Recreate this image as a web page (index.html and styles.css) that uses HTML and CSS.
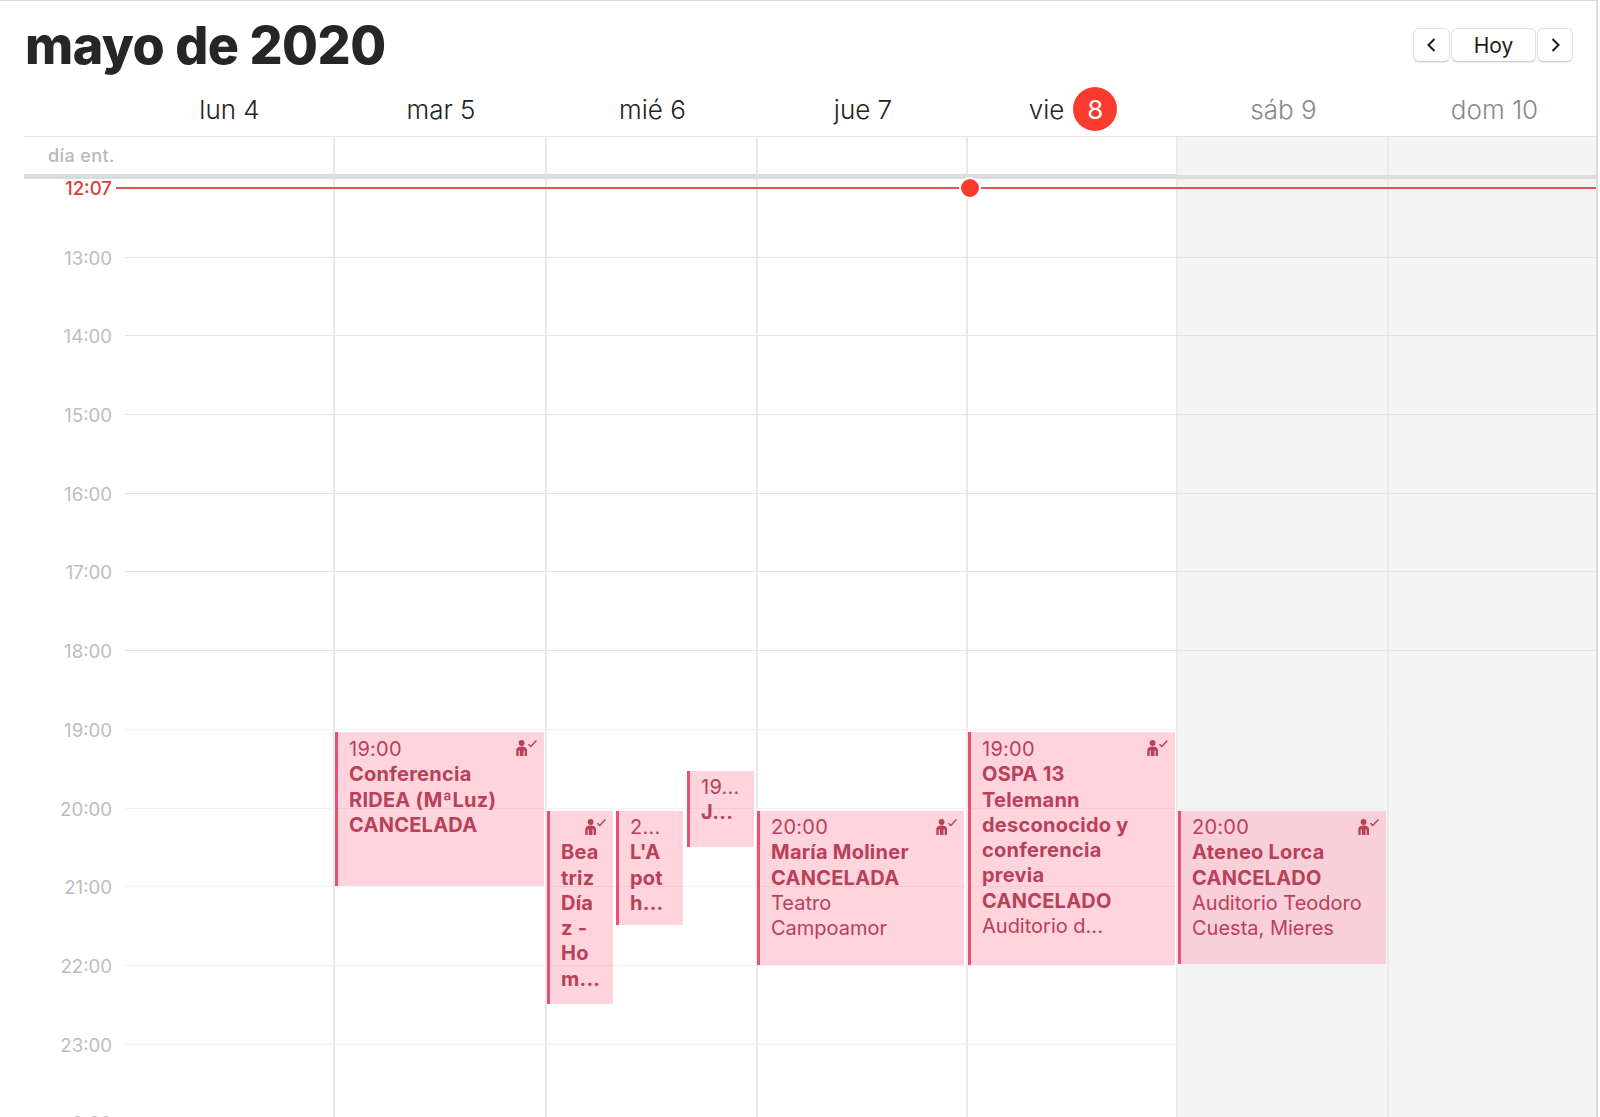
FILE: index.html
```html
<!DOCTYPE html>
<html lang="es">

<head>
    <meta charset="UTF-8">
    <meta name="viewport" content="width=device-width, initial-scale=1.0">
    <title>mayo de 2020</title>
    <link rel="stylesheet" href="styles.css">
</head>

<body>
    <svg class="defs" width="0" height="0">
        <symbol id="attendee" viewBox="0 0 21 16">
            <circle cx="5.6" cy="3" r="2.9" fill="currentColor"></circle>
            <path fill="currentColor" d="M0.3 16V10.2C0.3 7.8 2.6 6.6 5.6 6.6S11 7.8 11 10.2V16H8.6V10.4H7.5V16H3.8V10.4H2.7V16Z"></path>
            <path fill="none" stroke="currentColor" stroke-width="1.4" d="M12.4 4.2L14.8 6.4L20.4 0.6"></path>
        </symbol>
    </svg>

    <div class="calendar">
        <div class="top">
            <h1 class="title">mayo de 2020</h1>
            <div class="nav">
                <a href="javascript:;" class="btn btn-arrow" aria-label="Anterior">
                    <svg width="11" height="16" viewBox="0 0 11 16"><path d="M8.5 2L2.5 8L8.5 14"></path></svg>
                </a>
                <a href="javascript:;" class="btn btn-today">Hoy</a>
                <a href="javascript:;" class="btn btn-arrow" aria-label="Siguiente">
                    <svg width="11" height="16" viewBox="0 0 11 16"><path d="M2.5 2L8.5 8L2.5 14"></path></svg>
                </a>
            </div>
        </div>

        <div class="days week">
            <div class="gutter"></div>
            <div class="day">lun 4</div>
            <div class="day">mar 5</div>
            <div class="day">mié 6</div>
            <div class="day">jue 7</div>
            <div class="day">vie <span class="today">8</span></div>
            <div class="day off">sáb 9</div>
            <div class="day off last">dom 10</div>
        </div>

        <div class="allday week">
            <div class="gutter allday-label">día ent.</div>
            <div class="cell"></div>
            <div class="cell"></div>
            <div class="cell"></div>
            <div class="cell"></div>
            <div class="cell"></div>
            <div class="cell weekend"></div>
            <div class="cell weekend"></div>
        </div>

        <div class="timeline">
            <!-- columnas de fondo -->
            <div class="layer week">
                <div class="gutter"></div>
                <div class="cell"></div>
                <div class="cell"></div>
                <div class="cell"></div>
                <div class="cell"></div>
                <div class="cell"></div>
                <div class="cell weekend"></div>
                <div class="cell weekend"></div>
            </div>

            <!-- horas -->
            <div class="hours">
                <div class="hour"><span class="hour-label">13:00</span></div>
                <div class="hour"><span class="hour-label">14:00</span></div>
                <div class="hour"><span class="hour-label">15:00</span></div>
                <div class="hour"><span class="hour-label">16:00</span></div>
                <div class="hour"><span class="hour-label">17:00</span></div>
                <div class="hour"><span class="hour-label">18:00</span></div>
                <div class="hour night"><span class="hour-label">19:00</span></div>
                <div class="hour night"><span class="hour-label">20:00</span></div>
                <div class="hour night"><span class="hour-label">21:00</span></div>
                <div class="hour night"><span class="hour-label">22:00</span></div>
                <div class="hour night"><span class="hour-label">23:00</span></div>
                <div class="hour night"><span class="hour-label">0:00</span></div>
            </div>

            <!-- eventos -->
            <div class="layer week">
                <div class="gutter"></div>
                <div class="col"></div>
                <div class="col">
                    <div class="event ev-ridea">
                        <svg class="ico"><use href="#attendee"></use></svg>
                        <div>19:00</div>
                        <div class="name">Conferencia<br>RIDEA (MªLuz)<br>CANCELADA</div>
                    </div>
                </div>
                <div class="col">
                    <div class="event ev-beatriz">
                        <svg class="ico"><use href="#attendee"></use></svg>
                        <div>&nbsp;</div>
                        <div class="name">Bea<br>triz<br>Día<br>z -<br>Ho<br>m...</div>
                    </div>
                    <div class="event ev-lapoth">
                        <div>2...</div>
                        <div class="name">L'A<br>pot<br>h...</div>
                    </div>
                    <div class="event ev-j">
                        <div>19...</div>
                        <div class="name">J...</div>
                    </div>
                </div>
                <div class="col">
                    <div class="event ev-moliner">
                        <svg class="ico"><use href="#attendee"></use></svg>
                        <div>20:00</div>
                        <div class="name">María Moliner<br>CANCELADA</div>
                        <div class="place">Teatro<br>Campoamor</div>
                    </div>
                </div>
                <div class="col">
                    <div class="event ev-ospa">
                        <svg class="ico"><use href="#attendee"></use></svg>
                        <div>19:00</div>
                        <div class="name">OSPA 13<br>Telemann<br>desconocido y<br>conferencia<br>previa<br>CANCELADO</div>
                        <div class="place">Auditorio d...</div>
                    </div>
                </div>
                <div class="col">
                    <div class="event ev-ateneo">
                        <svg class="ico"><use href="#attendee"></use></svg>
                        <div>20:00</div>
                        <div class="name">Ateneo Lorca<br>CANCELADO</div>
                        <div class="place">Auditorio Teodoro<br>Cuesta, Mieres</div>
                    </div>
                </div>
                <div class="col"></div>
            </div>

            <!-- hora actual -->
            <div class="now">
                <span class="now-label">12:07</span>
                <span class="now-line"></span>
                <span class="now-dot"></span>
            </div>
        </div>
    </div>
</body>

</html>
```

FILE: styles.css
```css
* {
    margin: 0;
    padding: 0;
    box-sizing: border-box;
}

html,
body {
    height: 100%;
    overflow: hidden;
    background: #fff;
}

body {
    font-family: Inter, "Liberation Sans", sans-serif;
    color: #222;
}

.defs {
    position: absolute;
}

.calendar {
    width: 1598px;
    height: 1117px;
    padding-left: 24px;
    border-top: 1px solid #d9d9d9;
    border-right: 2px solid #dcdcdc;
    overflow: hidden;
}

.top {
    height: 81px;
    display: flex;
    justify-content: space-between;
    align-items: center;
    padding-right: 23px;
    padding-top: 7px;
}

.title {
    font-size: 52px;
    font-weight: 800;
    letter-spacing: -0.5px;
    color: #262626;
    padding-left: 1px;
}

.nav {
    display: flex;
    gap: 1px;
}

.btn {
    display: flex;
    align-items: center;
    justify-content: center;
    height: 34px;
    background: #fff;
    border: 1px solid #e2e2e2;
    border-bottom-color: #cfcfcf;
    border-radius: 6px;
    box-shadow: 0 1px 1px rgba(0, 0, 0, .08);
    color: #1c1c1c;
    text-decoration: none;
    font-size: 21px;
}

.btn-arrow {
    width: 36px;
}

.btn-arrow:first-child {
    width: 37px;
}

.btn-arrow path {
    fill: none;
    stroke: #1c1c1c;
    stroke-width: 2;
}

.btn-today {
    width: 85px;
}

.week {
    display: grid;
    grid-template-columns: 100px 211px 212px 211px 210px 210px 211px 1fr;
}

.days {
    height: 55px;
    border-bottom: 1px solid #e4e4e4;
}

.day {
    display: flex;
    align-items: center;
    justify-content: center;
    gap: 9px;
    font-size: 26px;
    font-weight: 300;
    color: #222;
}

.day.off {
    color: #8a8a8a;
}

.day.last {
    padding-left: 4px;
}

.today {
    width: 44px;
    height: 44px;
    border-radius: 50%;
    background: #fb3b30;
    color: #fff;
    font-weight: 400;
    display: flex;
    align-items: center;
    justify-content: center;
}

.allday {
    height: 37px;
    border-bottom: 5px solid #dcdcdc;
    box-sizing: content-box;
}

.allday-label {
    font-size: 18px;
    font-weight: 500;
    color: #b9b9b9;
    letter-spacing: .4px;
    padding-left: 24px;
    line-height: 38px;
}

.cell {
    border-right: 2px solid #e9e9e9;
}

.cell.weekend {
    background: #f4f4f4;
}

.cell:last-child {
    border-right: 0;
}

.timeline {
    position: relative;
}

.layer {
    position: absolute;
    left: 0;
    right: 0;
    top: 0;
    height: 940px;
}

.hours {
    position: relative;
}

.hour {
    height: 78.7px;
    display: flex;
    align-items: flex-end;
}

.hour::after {
    content: "";
    flex: 1;
    height: 1px;
    background: #e4e4e4;
    margin-left: 13px;
}

.hour.night::after {
    background: #f2f2f2;
}

.hour-label {
    width: 88px;
    text-align: right;
    font-size: 18.6px;
    line-height: 24px;
    margin-bottom: -12px;
    color: #bdbdbd;
}

.col {
    position: relative;
}

.event {
    position: absolute;
    padding: 4px 0 0 11px;
    border-left: 3px solid #ea5070;
    background: rgba(255, 60, 100, .22);
    color: #b94059;
    font-size: 20px;
    letter-spacing: .25px;
    line-height: 25.3px;
    overflow: hidden;
}

.name {
    font-weight: 700;
}

.place {
    letter-spacing: 0;
}

.ico {
    position: absolute;
    top: 8px;
    right: 7px;
    width: 21px;
    height: 16px;
    color: #b94059;
}

.ev-ridea {
    top: 553px;
    left: 0;
    width: 209px;
    height: 154px;
    padding-top: 5px;
}

.ev-beatriz {
    top: 632px;
    left: 0;
    width: 66px;
    height: 193px;
}

.ev-lapoth {
    top: 632px;
    left: 69px;
    width: 67px;
    height: 114px;
}

.ev-j {
    top: 592px;
    left: 140px;
    width: 67px;
    height: 76px;
}

.ev-moliner {
    top: 632px;
    left: -1px;
    width: 207px;
    height: 154px;
}

.ev-ospa {
    top: 553px;
    left: 0;
    width: 207px;
    height: 233px;
    padding-top: 5px;
}

.ev-ateneo {
    top: 632px;
    left: 0;
    width: 208px;
    height: 153px;
    background: rgba(255, 162, 184, .45);
}

.now {
    position: absolute;
    top: 0;
    left: 0;
    right: 0;
    height: 18px;
    display: flex;
    align-items: center;
}

.now-label {
    width: 88px;
    text-align: right;
    font-size: 18.6px;
    font-weight: 500;
    color: #d9403a;
}

.now-line {
    flex: 1;
    height: 2px;
    margin-left: 4px;
    background: #dc5550;
}

.now-dot {
    position: absolute;
    left: 935px;
    top: -2px;
    width: 22px;
    height: 22px;
    border-radius: 50%;
    background: #fb3b30;
    border: 2px solid #fff;
}
```
